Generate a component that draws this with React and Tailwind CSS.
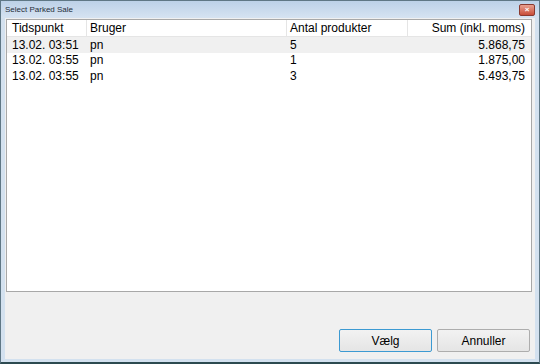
import React from "react";

const rows = [
  { time: "13.02. 03:51", user: "pn", count: "5", sum: "5.868,75", selected: true },
  { time: "13.02. 03:55", user: "pn", count: "1", sum: "1.875,00" },
  { time: "13.02. 03:55", user: "pn", count: "3", sum: "5.493,75" },
];

export default function App() {
  return (
    <div
      className="w-[540px] h-[364px] flex flex-col bg-[#d3e1ef] border border-[#5f7785] border-b-[2px] border-b-[#2c4a50] overflow-hidden"
      style={{ fontFamily: '"Liberation Sans", Arial, sans-serif' }}
    >
      {/* Title bar */}
      <div className="h-[17px] flex items-center justify-between pl-[4px] pr-[4px] bg-gradient-to-b from-[#bcd1e8] to-[#d6e3f1]">
        <span className="text-[8px] text-[#1f2d3a] leading-none">Select Parked Sale</span>
        <div className="w-[16px] h-[12px] mt-[1px] rounded-[2px] border border-[#8a3a30] bg-gradient-to-b from-[#e8a090] to-[#c84c38] flex items-center justify-center">
          <span className="text-[8px] leading-none text-white font-bold">×</span>
        </div>
      </div>

      {/* Client area */}
      <div className="flex-1 mx-[4px] mb-[3px] bg-[#f0f0f0] flex flex-col px-[1px] pt-[1px]">
        <div className="w-[526px] h-[273px] bg-white border border-[#a8a8a8] text-[12px] text-black">
          {/* Header */}
          <div className="h-[17px] flex items-center border-b border-[#e5e5e5]">
            <div className="w-[80px] pl-[5px] border-r border-[#e5e5e5] h-full flex items-center">Tidspunkt</div>
            <div className="w-[200px] pl-[3px] border-r border-[#e5e5e5] h-full flex items-center">Bruger</div>
            <div className="w-[121px] pl-[3px] border-r border-[#e5e5e5] h-full flex items-center">Antal produkter</div>
            <div className="w-[122px] pr-[5px] h-full flex items-center justify-end">Sum (inkl. moms)</div>
          </div>
          {rows.map((r, i) => (
            <div
              key={i}
              className={`h-[15.5px] flex items-center ${r.selected ? "bg-[#f0f0f0]" : ""}`}
            >
              <div className="w-[80px] pl-[5px]">{r.time}</div>
              <div className="w-[200px] pl-[3px]">{r.user}</div>
              <div className="w-[121px] pl-[3px]">{r.count}</div>
              <div className="w-[122px] pr-[5px] text-right">{r.sum}</div>
            </div>
          ))}
        </div>

        <div className="flex-1 flex items-end justify-end gap-[5px] pr-[4px] pb-[7px]">
          <button className="w-[93px] h-[23px] border border-[#3c9ad2] rounded-[2px] bg-gradient-to-b from-[#f2f2f2] to-[#e5e5e5] text-[12px] text-black">
            Vælg
          </button>
          <button className="w-[93px] h-[23px] border border-[#adadad] rounded-[2px] bg-gradient-to-b from-[#f2f2f2] to-[#e5e5e5] text-[12px] text-black">
            Annuller
          </button>
        </div>
      </div>
    </div>
  );
}
